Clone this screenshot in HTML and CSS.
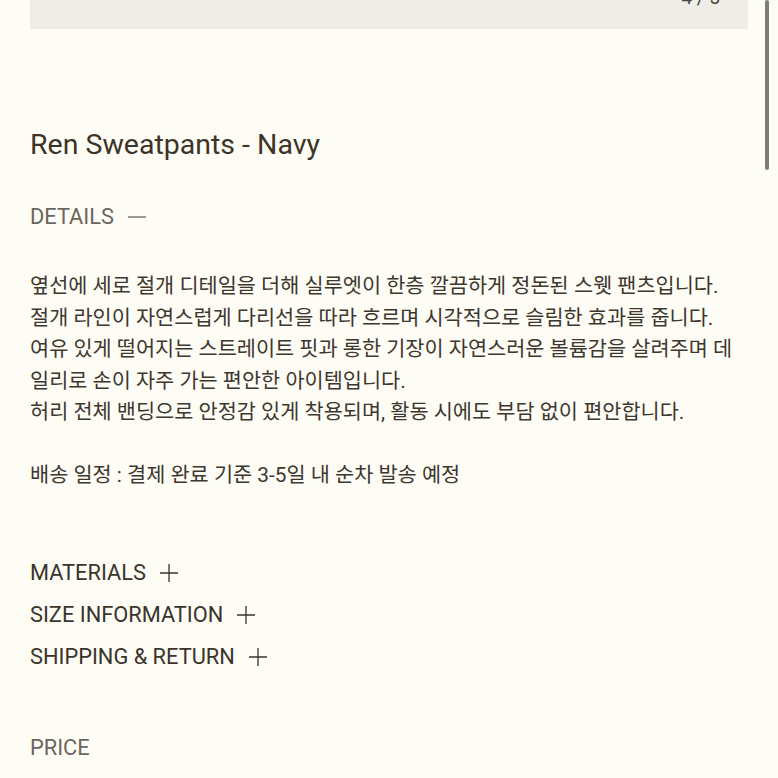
FILE: index.html
```html
<!DOCTYPE html>
<html>
<head>
    <title>Ren Sweatpants - Navy</title>
    <link rel="stylesheet" href="styles.css">
</head>
<body>
    <div class="gallery">
        <span class="counter">4 / 5</span>
    </div>

    <div class="product">
        <h1 class="product-title">Ren Sweatpants - Navy</h1>

        <div class="section open">
            <div class="section-head muted">DETAILS
                <svg class="toggle" width="18" height="18" viewBox="0 0 18 18"><path d="M0 9H18" stroke="currentColor" stroke-width="1.3"/></svg>
            </div>
            <div class="section-body">
                <p>옆선에 세로 절개 디테일을 더해 실루엣이 한층 깔끔하게 정돈된 스웻 팬츠입니다.<br>
                절개 라인이 자연스럽게 다리선을 따라 흐르며 시각적으로 슬림한 효과를 줍니다.<br>
                여유 있게 떨어지는 스트레이트 핏과 롱한 기장이 자연스러운 볼륨감을 살려주며 데<br>
                일리로 손이 자주 가는 편안한 아이템입니다.<br>
                허리 전체 밴딩으로 안정감 있게 착용되며, 활동 시에도 부담 없이 편안합니다.</p>
                <p>배송 일정 : 결제 완료 기준 3-5일 내 순차 발송 예정</p>
            </div>
        </div>

        <div class="accordion">
            <div class="section-head">MATERIALS
                <svg class="toggle" width="18" height="18" viewBox="0 0 18 18"><path d="M0 9H18M9 0V18" stroke="currentColor" stroke-width="1.3"/></svg>
            </div>
            <div class="section-head">SIZE INFORMATION
                <svg class="toggle" width="18" height="18" viewBox="0 0 18 18"><path d="M0 9H18M9 0V18" stroke="currentColor" stroke-width="1.3"/></svg>
            </div>
            <div class="section-head">SHIPPING &amp; RETURN
                <svg class="toggle" width="18" height="18" viewBox="0 0 18 18"><path d="M0 9H18M9 0V18" stroke="currentColor" stroke-width="1.3"/></svg>
            </div>
        </div>

        <div class="price">
            <div class="section-head muted">PRICE</div>
            <div class="price-value">KRW 89,000</div>
        </div>
    </div>

    <div class="scrollbar"></div>
</body>
</html>
```

FILE: styles.css
```css
body {
    margin: 0;
    padding: 0 30px;
    background-color: #fdfcf5;
    font-family: Roboto, "Noto Sans CJK KR", sans-serif;
    color: #3b342b;
    overflow: hidden;
}
.gallery {
    height: 29px;
    background-color: #eeede7;
    display: flex;
    justify-content: flex-end;
    padding-right: 28px;
}
.counter {
    font-size: 19px;
    line-height: 19px;
    margin-top: -12px;
    color: #4a453e;
}
.product {
    padding-top: 98px;
}
.product-title {
    font-size: 28.5px;
    font-weight: 400;
    margin: 0 0 42px;
    line-height: 36px;
    color: #3d3427;
}
.section-head {
    font-size: 21.8px;
    line-height: 24px;
    display: flex;
    align-items: center;
    gap: 14px;
}
.muted {
    color: #6c665f;
}
.toggle {
    flex-shrink: 0;
}
.section-body {
    padding-top: 42px;
    font-size: 20.8px;
    line-height: 31.5px;
    color: #3d372e;
}
.section-body p {
    margin: 0 0 31px;
}
.accordion {
    padding-top: 39px;
    display: flex;
    flex-direction: column;
    gap: 18px;
}
.price {
    padding-top: 67px;
}
.price-value {
    margin-top: 20px;
    font-size: 21px;
    color: #3d372e;
}
.scrollbar {
    position: fixed;
    top: 0;
    right: 9px;
    width: 4px;
    height: 170px;
    border-radius: 2px;
    background-color: #7d7c77;
}
```
